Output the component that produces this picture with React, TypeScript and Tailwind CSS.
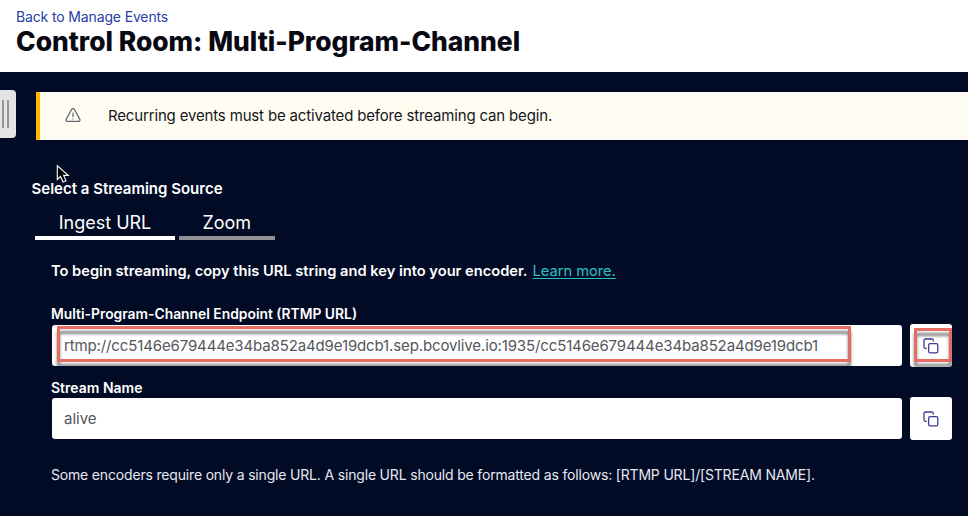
import type { ReactNode } from 'react';

function CopyIcon() {
  return (
    <svg width="16" height="16" viewBox="0 0 16 16" fill="none" stroke="#3c3a94" strokeWidth="1.3" strokeLinecap="round" strokeLinejoin="round">
      <rect x="5.6" y="5.6" width="9.2" height="9.2" rx="1.6" />
      <path d="M3.3 10.3H2.4A1.4 1.4 0 0 1 1 8.9V2.4A1.4 1.4 0 0 1 2.4 1H8.9A1.4 1.4 0 0 1 10.3 2.4V3.1" />
    </svg>
  );
}

function WarningIcon() {
  return (
    <svg width="16" height="15" viewBox="0 0 16 15" className="-mt-px" fill="none" stroke="#62636b" strokeWidth="1.2" strokeLinecap="round" strokeLinejoin="round">
      <path d="M6.7 1.3a1.5 1.5 0 0 1 2.6 0l5.6 10.1a1.4 1.4 0 0 1-1.2 2H2.3a1.4 1.4 0 0 1-1.2-2z" />
      <path d="M8 5v3.6M8 10.8v.1" />
    </svg>
  );
}

function Highlight({ className }: { className: string }) {
  return (
    <div className={`pointer-events-none absolute border-[3px] border-[#e66d64] drop-shadow-[0_5px_1.5px_rgba(0,0,0,0.5)] ${className}`} />
  );
}

type FieldProps = { value: string; textClass: string; inputMark?: ReactNode; buttonMark?: ReactNode };

function Field({ value, textClass, inputMark, buttonMark }: FieldProps) {
  return (
    <div className="flex h-[43px] items-center gap-2">
      <div className="relative flex h-[41px] w-[850px] items-center overflow-hidden rounded-[3px] bg-white pt-[2px] pl-[12px]">
        <span className={`whitespace-nowrap text-[#55565c] ${textClass}`}>{value}</span>
        {inputMark}
      </div>
      <button className="relative flex h-[43px] w-[42px] items-center justify-center overflow-hidden rounded-[3px] bg-white">
        <CopyIcon />
        {buttonMark}
      </button>
    </div>
  );
}

export default function App() {
  return (
    <div className="relative flex h-[516px] w-[968px] flex-col overflow-hidden bg-[#020b26] font-['Inter',sans-serif] text-white">
      <header className="h-[72px] bg-white pl-4 pt-[7px] whitespace-nowrap">
        <a className="block text-[14px] leading-[19px] tracking-[-0.14px] text-[#2540a5]"><span>Back to Manage Events</span></a>
        <h1 className="text-[26.4px] leading-[30px] font-extrabold text-[#070812]"><span>Control Room: Multi-Program-Channel</span></h1>
      </header>

      <div className="flex h-[88px] items-start pt-[18px]">
        <div className="flex h-12 w-4 shrink-0 items-center gap-[3px] rounded-r-[4px] bg-[#e4e4e4] pl-[2px]">
          <div className="h-[28px] w-[2px] bg-[#949494]" />
          <div className="h-[28px] w-[2px] bg-[#949494]" />
        </div>
        <div className="mt-[2px] ml-5 flex h-[48px] flex-1 items-center border-l-4 border-[#ffb600] bg-[#fffdf1] pl-[25px]">
          <WarningIcon />
          <span className="ml-[27px] whitespace-nowrap pt-px text-[15px] tracking-[-0.16px] text-[#15161d]">Recurring events must be activated before streaming can begin.</span>
        </div>
      </div>

      <main className="pt-[18px] whitespace-nowrap">
        <h2 className="pl-[31.5px] text-[15px] leading-[22px] font-semibold">Select a Streaming Source</h2>
        <div className="mt-[8px] flex h-[32px] gap-[4px] pl-[35px] text-[18px] leading-[29px]">
          <div className="w-[140px] border-b-4 border-white text-center"><span>Ingest URL</span></div>
          <div className="w-[95.5px] border-b-4 border-[#929296] text-center"><span>Zoom</span></div>
        </div>
        <section className="pl-[52px]">
          <p className="mt-[21px] -ml-px text-[14.65px] leading-[20px]">
            <span className="font-semibold">To begin streaming, copy this URL string and key into your encoder.</span>
            <a className="ml-[5px] text-[#2cc1c6] underline underline-offset-2">Learn more.</a>
          </p>
          <h3 className="mt-[23px] mb-[-1px] -ml-px h-[21px] text-[13.85px] leading-[21px] font-semibold">Multi-Program-Channel Endpoint (RTMP URL)</h3>
          <Field
            value="rtmp://cc5146e679444e34ba852a4d9e19dcb1.sep.bcovlive.io:1935/cc5146e679444e34ba852a4d9e19dcb1"
            textClass="text-[15px] tracking-[-0.13px]"
            inputMark={<Highlight className="left-[5px] top-[1px] h-[36px] w-[794px]" />}
            buttonMark={<Highlight className="left-[4px] top-[4px] h-[34px] w-[38px]" />}
          />
          <h3 className="mt-[10px] -ml-px h-[20px] text-[14px] leading-[21px] font-semibold">Stream Name</h3>
          <Field value="alive" textClass="text-[15px]" />
          <p className="mt-[25px] -ml-px text-[14px] leading-[20px] tracking-[-0.175px] text-[#e6e8f0]"><span>Some encoders require only a single URL. A single URL should be formatted as follows: [RTMP URL]/[STREAM NAME].</span></p>
        </section>
      </main>

      <svg className="absolute left-[56px] top-[164px]" width="15" height="20" viewBox="0 0 15 20">
        <path d="M1.3 1.8V15.4L4.5 12.5L7 18L10 16.7L7.7 11.4H12.2Z" fill="#000" stroke="#fff" strokeWidth="1.1" />
      </svg>
    </div>
  );
}
